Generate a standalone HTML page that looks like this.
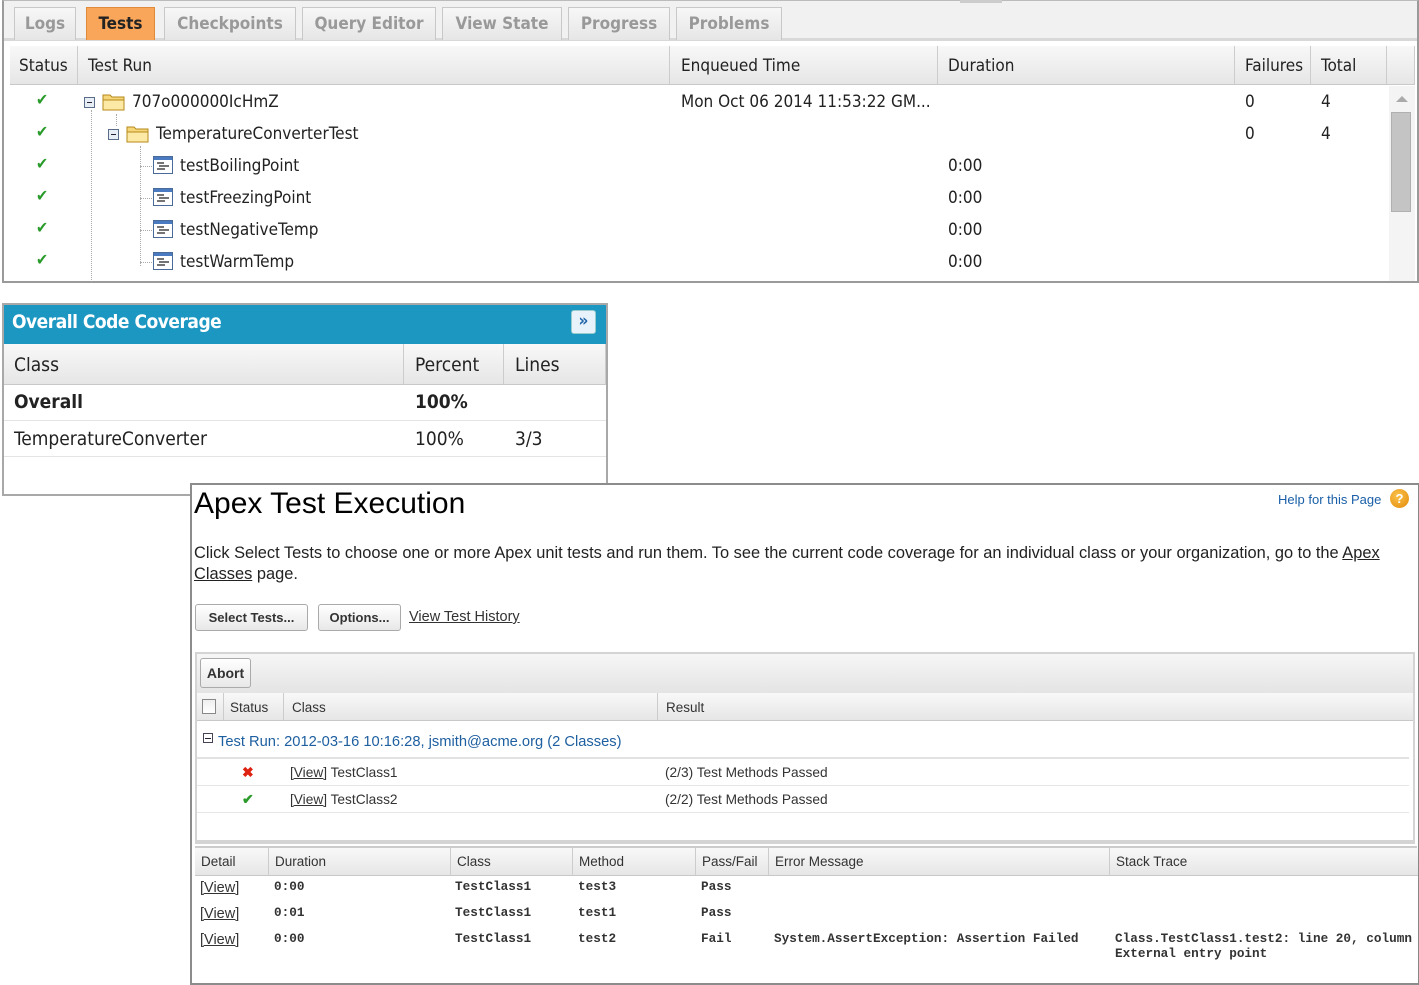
<!DOCTYPE html>
<html><head><meta charset="utf-8"><style>
*{box-sizing:border-box;margin:0;padding:0}
body{width:1419px;height:985px;background:#fff;position:relative;overflow:hidden;font-family:"DejaVu Sans Condensed","DejaVu Sans",sans-serif;font-stretch:condensed;color:#222}
.a{position:absolute;white-space:nowrap}
.ar{font-family:"Liberation Sans",Arial,sans-serif;font-stretch:normal}
.mo{font-family:"Liberation Mono",monospace;font-stretch:normal;font-size:12.7px;font-weight:bold;color:#333}
.tab{position:absolute;top:7px;height:33px;background:linear-gradient(#f7f7f7,#e6e6e6);border:1px solid #c8c8c8;border-bottom:none;color:#999;font-weight:bold;font-size:17px;text-align:center;line-height:33px}
.hd{position:absolute;background:linear-gradient(#f8f8f8,#e6e6e6);border-right:1px solid #ccc;border-bottom:1px solid #c8c8c8}
.chk{color:#2a9a2a;font-size:16px;font-weight:bold}
.lnk{text-decoration:underline}
.btn{position:absolute;height:27px;border:1px solid #aaa;border-radius:3px;background:linear-gradient(#fff,#e8e8e8);font-family:"Liberation Sans",Arial,sans-serif;font-weight:bold;font-size:13px;color:#333;line-height:25px;text-align:center}
.dot{position:absolute;border-left:1px dotted #aaa}
.doth{position:absolute;border-top:1px dotted #aaa}
</style></head><body>

<div class="a" style="left:2px;top:0;width:1417px;height:283px;border:2px solid #9a9a9a;border-top:1px solid #bbb;background:#fff"></div>
<div class="a" style="left:4px;top:1px;width:1413px;height:40px;background:#f1f1f1;border-bottom:3px solid #d8d8d8"></div>
<div class="a" style="left:960px;top:0;width:42px;height:3px;background:#ccc"></div>
<div class="tab" style="left:14px;width:62px">Logs</div>
<div class="tab" style="left:86px;width:69px;background:#f9a65a;border-color:#e08a3a;color:#222">Tests</div>
<div class="tab" style="left:164px;width:132px">Checkpoints</div>
<div class="tab" style="left:302px;width:134px">Query Editor</div>
<div class="tab" style="left:442px;width:120px">View State</div>
<div class="tab" style="left:568px;width:102px">Progress</div>
<div class="tab" style="left:676px;width:106px">Problems</div>

<div class="hd" style="left:10px;top:46px;width:68px;height:39px"></div>
<div class="hd" style="left:78px;top:46px;width:592px;height:39px"></div>
<div class="hd" style="left:670px;top:46px;width:268px;height:39px"></div>
<div class="hd" style="left:938px;top:46px;width:297px;height:39px"></div>
<div class="hd" style="left:1235px;top:46px;width:76px;height:39px"></div>
<div class="hd" style="left:1311px;top:46px;width:76px;height:39px"></div>
<div class="hd" style="left:1387px;top:46px;width:28px;height:39px"></div>
<div class="a" style="left:19px;top:56px;font-size:17px">Status</div>
<div class="a" style="left:88px;top:56px;font-size:17px">Test Run</div>
<div class="a" style="left:681px;top:56px;font-size:17px">Enqueued Time</div>
<div class="a" style="left:948px;top:56px;font-size:17px">Duration</div>
<div class="a" style="left:1245px;top:56px;font-size:17px">Failures</div>
<div class="a" style="left:1321px;top:56px;font-size:17px">Total</div>

<div class="a" style="left:1389px;top:86px;width:26px;height:195px;background:#f4f4f4"></div>
<div class="a" style="left:1396px;top:96px;width:0;height:0;border-left:6px solid transparent;border-right:6px solid transparent;border-bottom:6px solid #aaa"></div>
<div class="a" style="left:1391px;top:112px;width:20px;height:100px;background:#c4c4c4;border:1px solid #b0b0b0"></div>

<div class="dot" style="left:91px;top:110px;height:172px"></div>
<div class="dot" style="left:116px;top:114px;height:12px"></div>
<div class="dot" style="left:140px;top:146px;height:120px"></div>
<div class="doth" style="left:140px;top:166px;width:12px"></div>
<div class="doth" style="left:140px;top:198px;width:12px"></div>
<div class="doth" style="left:140px;top:230px;width:12px"></div>
<div class="doth" style="left:140px;top:262px;width:12px"></div>

<div class="a chk" style="left:36px;top:90px">✔</div>
<div class="a chk" style="left:36px;top:122px">✔</div>
<div class="a chk" style="left:36px;top:154px">✔</div>
<div class="a chk" style="left:36px;top:186px">✔</div>
<div class="a chk" style="left:36px;top:218px">✔</div>
<div class="a chk" style="left:36px;top:250px">✔</div>

<svg class="a" style="left:84px;top:93px" width="44" height="18"><rect x="0.5" y="4.5" width="10" height="10" fill="#e8eef6" stroke="#5a6c88"/><line x1="3" y1="9.5" x2="8" y2="9.5" stroke="#223"/><path d="M19 2h7l2 2h12v13H19z" fill="#f5d77a" stroke="#b58a1a"/><path d="M19 7h21v10H19z" fill="#fde9a6" stroke="#b58a1a"/></svg>
<div class="a" style="left:132px;top:92px;font-size:17px">707o000000IcHmZ</div>
<div class="a" style="left:681px;top:92px;font-size:17px">Mon Oct 06 2014 11:53:22 GM...</div>
<div class="a" style="left:1245px;top:92px;font-size:17px">0</div>
<div class="a" style="left:1321px;top:92px;font-size:17px">4</div>

<svg class="a" style="left:108px;top:125px" width="44" height="18"><rect x="0.5" y="4.5" width="10" height="10" fill="#e8eef6" stroke="#5a6c88"/><line x1="3" y1="9.5" x2="8" y2="9.5" stroke="#223"/><path d="M19 2h7l2 2h12v13H19z" fill="#f5d77a" stroke="#b58a1a"/><path d="M19 7h21v10H19z" fill="#fde9a6" stroke="#b58a1a"/></svg>
<div class="a" style="left:156px;top:124px;font-size:17px">TemperatureConverterTest</div>
<div class="a" style="left:1245px;top:124px;font-size:17px">0</div>
<div class="a" style="left:1321px;top:124px;font-size:17px">4</div>

<svg width="0" height="0" style="position:absolute"><defs><g id="m"><rect x="0.5" y="0.5" width="19" height="17" fill="#fff" stroke="#4a6a9a"/><rect x="1" y="1" width="18" height="3" fill="#4a7ac0"/><path d="M4 7h7M6 10h10M4 13h8" stroke="#222" stroke-width="1.3"/></g></defs></svg>
<svg class="a" style="left:153px;top:156px" width="21" height="19"><use href="#m"/></svg>
<svg class="a" style="left:153px;top:188px" width="21" height="19"><use href="#m"/></svg>
<svg class="a" style="left:153px;top:220px" width="21" height="19"><use href="#m"/></svg>
<svg class="a" style="left:153px;top:252px" width="21" height="19"><use href="#m"/></svg>
<div class="a" style="left:180px;top:156px;font-size:17px">testBoilingPoint</div>
<div class="a" style="left:180px;top:188px;font-size:17px">testFreezingPoint</div>
<div class="a" style="left:180px;top:220px;font-size:17px">testNegativeTemp</div>
<div class="a" style="left:180px;top:252px;font-size:17px">testWarmTemp</div>
<div class="a" style="left:948px;top:156px;font-size:17px">0:00</div>
<div class="a" style="left:948px;top:188px;font-size:17px">0:00</div>
<div class="a" style="left:948px;top:220px;font-size:17px">0:00</div>
<div class="a" style="left:948px;top:252px;font-size:17px">0:00</div>

<div class="a" style="left:2px;top:303px;width:606px;height:193px;border:2px solid #a8a8a8;background:#fff"></div>
<div class="a" style="left:4px;top:305px;width:602px;height:39px;background:#1b97c2"></div>
<div class="a" style="left:12px;top:311px;font-size:19px;font-weight:bold;color:#fff;letter-spacing:-0.5px">Overall Code Coverage</div>
<div class="a" style="left:571px;top:310px;width:25px;height:24px;background:#e8f2fb;border:1px solid #9cc;border-radius:3px;color:#2266aa;font-size:17px;font-weight:bold;text-align:center;line-height:21px">»</div>
<div class="hd" style="left:4px;top:344px;width:400px;height:41px"></div>
<div class="hd" style="left:404px;top:344px;width:100px;height:41px"></div>
<div class="hd" style="left:504px;top:344px;width:102px;height:41px"></div>
<div class="a" style="left:14px;top:354px;font-size:19px">Class</div>
<div class="a" style="left:415px;top:354px;font-size:19px">Percent</div>
<div class="a" style="left:515px;top:354px;font-size:19px">Lines</div>
<div class="a" style="left:4px;top:420px;width:602px;border-top:1px solid #e4e4e4"></div>
<div class="a" style="left:4px;top:456px;width:602px;border-top:1px solid #e4e4e4"></div>
<div class="a" style="left:14px;top:391px;font-size:19px;font-weight:bold">Overall</div>
<div class="a" style="left:415px;top:391px;font-size:19px;font-weight:bold">100%</div>
<div class="a" style="left:14px;top:428px;font-size:19px">TemperatureConverter</div>
<div class="a" style="left:415px;top:428px;font-size:19px">100%</div>
<div class="a" style="left:515px;top:428px;font-size:19px">3/3</div>

<div class="a ar" style="left:190px;top:483px;width:1229px;height:502px;border:2px solid #8c8c8c;border-right:1px solid #888;background:#fff"></div>
<div class="a ar" style="left:194px;top:487px;font-size:30px;color:#000">Apex Test Execution</div>
<div class="a ar" style="left:1278px;top:492px;font-size:13px;color:#1a5fa8">Help for this Page</div>
<div class="a ar" style="left:1390px;top:489px;width:19px;height:19px;border-radius:50%;background:radial-gradient(circle at 40% 35%,#fbc24a,#e28a0a);color:#fff;font-weight:bold;font-size:13px;text-align:center;line-height:19px">?</div>
<div class="a ar" style="left:194px;top:544px;font-size:16.4px;color:#222">Click Select Tests to choose one or more Apex unit tests and run them. To see the current code coverage for an individual class or your organization, go to the <span class="lnk">Apex</span></div>
<div class="a ar" style="left:194px;top:565px;font-size:16.4px;color:#222"><span class="lnk">Classes</span> page.</div>
<div class="btn" style="left:195px;top:604px;width:113px">Select Tests...</div>
<div class="btn" style="left:318px;top:604px;width:83px">Options...</div>
<div class="a ar lnk" style="left:409px;top:609px;font-size:14.5px;color:#333">View Test History</div>

<div class="a" style="left:195px;top:652px;width:1220px;height:192px;border:2px solid #d4d4d4;border-bottom:4px solid #d4d4d4;background:#fff"></div>
<div class="a" style="left:197px;top:654px;width:1216px;height:39px;background:linear-gradient(#f6f6f6,#e4e4e4)"></div>
<div class="btn" style="left:200px;top:658px;width:51px;height:30px;line-height:28px;font-size:14px">Abort</div>
<div class="hd" style="left:197px;top:693px;width:27px;height:28px"></div>
<div class="hd" style="left:224px;top:693px;width:60px;height:28px"></div>
<div class="hd" style="left:284px;top:693px;width:374px;height:28px"></div>
<div class="hd" style="left:658px;top:693px;width:755px;height:28px;border-right:none"></div>
<div class="a" style="left:202px;top:699px;width:14px;height:15px;border:1px solid #888;background:linear-gradient(#eee,#fff)"></div>
<div class="a ar" style="left:230px;top:700px;font-size:13.5px;color:#333">Status</div>
<div class="a ar" style="left:292px;top:700px;font-size:13.5px;color:#333">Class</div>
<div class="a ar" style="left:666px;top:700px;font-size:13.5px;color:#333">Result</div>
<div class="a" style="left:203px;top:733px;width:10px;height:10px;border:1px solid #445"></div>
<div class="a" style="left:205px;top:738px;width:6px;border-top:1px solid #223"></div>
<div class="a ar" style="left:218px;top:734px;font-size:14.7px;color:#1e5fa0">Test Run: 2012-03-16 10:16:28, jsmith@acme.org (2 Classes)</div>
<div class="a" style="left:197px;top:757px;width:1212px;border-top:2px solid #e2e2e2"></div>
<div class="a" style="left:197px;top:785px;width:1212px;border-top:1px solid #e6e6e6"></div>
<div class="a" style="left:197px;top:812px;width:1212px;border-top:1px solid #e6e6e6"></div>
<div class="a ar" style="left:242px;top:764px;font-size:14px;font-weight:bold;color:#d21">✖</div>
<div class="a ar" style="left:242px;top:791px;font-size:14px;font-weight:bold;color:#2a9a2a">✔</div>
<div class="a ar" style="left:290px;top:765px;font-size:13.7px;color:#333"><span class="lnk">[View]</span> TestClass1</div>
<div class="a ar" style="left:290px;top:792px;font-size:13.7px;color:#333"><span class="lnk">[View]</span> TestClass2</div>
<div class="a ar" style="left:665px;top:765px;font-size:13.7px;color:#333">(2/3) Test Methods Passed</div>
<div class="a ar" style="left:665px;top:792px;font-size:13.7px;color:#333">(2/2) Test Methods Passed</div>

<div class="a" style="left:195px;top:846px;width:1222px;border-top:2px solid #ccc"></div>
<div class="hd" style="left:195px;top:848px;width:74px;height:28px"></div>
<div class="hd" style="left:269px;top:848px;width:182px;height:28px"></div>
<div class="hd" style="left:451px;top:848px;width:122px;height:28px"></div>
<div class="hd" style="left:573px;top:848px;width:123px;height:28px"></div>
<div class="hd" style="left:696px;top:848px;width:73px;height:28px"></div>
<div class="hd" style="left:769px;top:848px;width:341px;height:28px"></div>
<div class="hd" style="left:1110px;top:848px;width:308px;height:28px;border-right:none"></div>
<div class="a ar" style="left:201px;top:854px;font-size:13.5px;color:#333">Detail</div>
<div class="a ar" style="left:275px;top:854px;font-size:13.5px;color:#333">Duration</div>
<div class="a ar" style="left:457px;top:854px;font-size:13.5px;color:#333">Class</div>
<div class="a ar" style="left:579px;top:854px;font-size:13.5px;color:#333">Method</div>
<div class="a ar" style="left:702px;top:854px;font-size:13.5px;color:#333">Pass/Fail</div>
<div class="a ar" style="left:775px;top:854px;font-size:13.5px;color:#333">Error Message</div>
<div class="a ar" style="left:1116px;top:854px;font-size:13.5px;color:#333">Stack Trace</div>

<div class="a ar lnk" style="left:200px;top:880px;font-size:14.5px;color:#333">[View]</div>
<div class="a ar lnk" style="left:200px;top:906px;font-size:14.5px;color:#333">[View]</div>
<div class="a ar lnk" style="left:200px;top:932px;font-size:14.5px;color:#333">[View]</div>
<div class="a mo" style="left:274px;top:879px">0:00</div>
<div class="a mo" style="left:274px;top:905px">0:01</div>
<div class="a mo" style="left:274px;top:931px">0:00</div>
<div class="a mo" style="left:455px;top:879px">TestClass1</div>
<div class="a mo" style="left:455px;top:905px">TestClass1</div>
<div class="a mo" style="left:455px;top:931px">TestClass1</div>
<div class="a mo" style="left:578px;top:879px">test3</div>
<div class="a mo" style="left:578px;top:905px">test1</div>
<div class="a mo" style="left:578px;top:931px">test2</div>
<div class="a mo" style="left:701px;top:879px">Pass</div>
<div class="a mo" style="left:701px;top:905px">Pass</div>
<div class="a mo" style="left:701px;top:931px">Fail</div>
<div class="a mo" style="left:774px;top:931px">System.AssertException: Assertion Failed</div>
<div class="a mo" style="left:1115px;top:931px">Class.TestClass1.test2: line 20, column</div>
<div class="a mo" style="left:1115px;top:946px">External entry point</div>
</body></html>
